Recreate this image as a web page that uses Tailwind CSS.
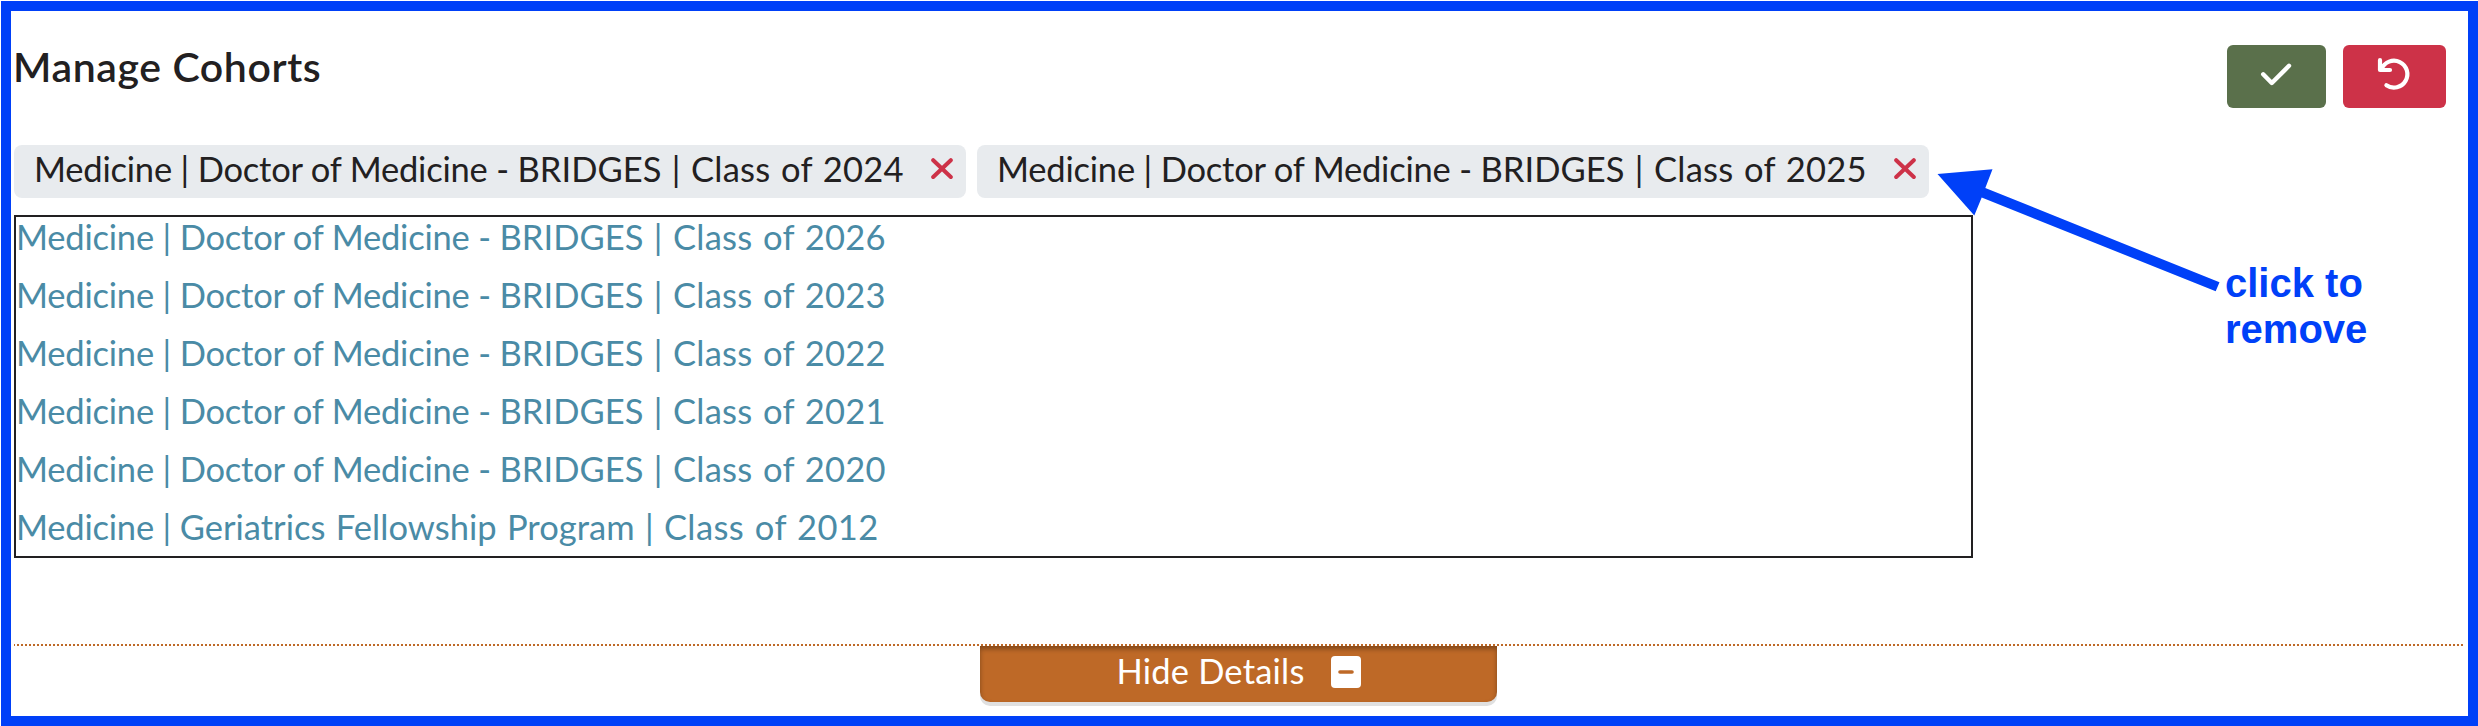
<!DOCTYPE html>
<html lang="en">
<head>
<meta charset="utf-8">
<title>Manage Cohorts</title>
<script src="https://cdn.jsdelivr.net/npm/@tailwindcss/browser@4"></script>
</head>
<body class="bg-white">
<div class="relative h-[726px] w-[2478px] overflow-hidden pt-px pl-px font-['Lato','Open_Sans',sans-serif] text-[34.5px] leading-10 text-[#222021]">
  <main class="flex h-[725px] w-[2477px] flex-col border-10 border-[#0040f8] pl-[3px]">
    <header class="flex h-[134px] items-start justify-between pt-[34px] pr-[22px]">
      <h1 class="mt-0.5 -ml-px text-[41px] leading-10 font-semibold tracking-[0.6px]">Manage Cohorts</h1>
      <div class="flex gap-[17px]">
        <button class="flex h-[63px] w-[99px] items-center justify-center rounded-[6px] bg-[#5a704b]" aria-label="Save">
          <svg class="h-[63px] w-[99px]" viewBox="0 0 99 63" fill="none" stroke="#fff" stroke-width="4.4" stroke-linecap="round" stroke-linejoin="round"><path d="M36.2 29.3 44.8 38 62 20.8"/></svg>
        </button>
        <button class="flex h-[63px] w-[103px] items-center justify-center rounded-[6px] bg-[#cd3248]" aria-label="Undo">
          <svg class="h-[63px] w-[103px]" viewBox="0 0 103 63" fill="none" stroke="#fff" stroke-width="4.2" stroke-linecap="round" stroke-linejoin="round"><path d="M37 15.2V25H47M38.5 24.2A13.4 13.4 0 1 1 43.4 40.2"/></svg>
        </button>
      </div>
    </header>
    <ul class="flex gap-[11px] whitespace-nowrap">
      <li class="flex h-[53px] w-[952px] items-center justify-between rounded-lg bg-[#e8ebee] pr-[13px] pb-1.5 pl-5">
        <span class="tracking-[-0.2px]">Medicine | Doctor of Medicine - <span class="tracking-[0.05px] [word-spacing:1.5px]">BRIDGES | <span class="tracking-[0.26px]">Class of 2024</span></span></span>
        <svg class="h-[22px] w-[22px]" viewBox="0 0 22 22" fill="none" stroke="#cd3248" stroke-width="4" stroke-linecap="round"><path d="M2.2 2.2 19.8 19M19.8 2.2 2.2 19"/></svg>
      </li>
      <li class="flex h-[53px] w-[952px] items-center justify-between rounded-lg bg-[#e8ebee] pr-[13px] pb-1.5 pl-5">
        <span class="tracking-[-0.2px]">Medicine | Doctor of Medicine - <span class="tracking-[0.05px] [word-spacing:1.5px]">BRIDGES | <span class="tracking-[0.26px]">Class of 2025</span></span></span>
        <svg class="h-[22px] w-[22px]" viewBox="0 0 22 22" fill="none" stroke="#cd3248" stroke-width="4" stroke-linecap="round"><path d="M2.2 2.2 19.8 19M19.8 2.2 2.2 19"/></svg>
      </li>
    </ul>
    <ul class="mt-[17px] flex h-[343px] w-[1959px] flex-col gap-[18px] border-2 border-[#222021] tracking-[-0.2px] whitespace-nowrap text-[#4a8ba6]">
      <li>Medicine | Doctor of Medicine - <span class="tracking-[0.05px] [word-spacing:1.5px]">BRIDGES | <span class="tracking-[0.26px]">Class of 2026</span></span></li>
      <li>Medicine | Doctor of Medicine - <span class="tracking-[0.05px] [word-spacing:1.5px]">BRIDGES | <span class="tracking-[0.26px]">Class of 2023</span></span></li>
      <li>Medicine | Doctor of Medicine - <span class="tracking-[0.05px] [word-spacing:1.5px]">BRIDGES | <span class="tracking-[0.26px]">Class of 2022</span></span></li>
      <li>Medicine | Doctor of Medicine - <span class="tracking-[0.05px] [word-spacing:1.5px]">BRIDGES | <span class="tracking-[0.26px]">Class of 2021</span></span></li>
      <li>Medicine | Doctor of Medicine - <span class="tracking-[0.05px] [word-spacing:1.5px]">BRIDGES | <span class="tracking-[0.26px]">Class of 2020</span></span></li>
      <li>Medicine | <span class="tracking-[0.02px] [word-spacing:1.5px]">Geriatrics Fellowship Program | <span class="tracking-[0.4px]">Class of 2012</span></span></li>
    </ul>
    <footer class="mt-[86px] w-[2450px]">
      <div class="h-0.5 bg-[repeating-linear-gradient(90deg,#be6927_0_1px,transparent_1px_3px,#be6927_3px_4px)]"></div>
      <button class="ml-[966px] flex h-14 w-[517px] items-center justify-center gap-[26px] rounded-b-[10px] bg-[#be6927] pb-[7px] text-white shadow-[0_4px_0_#e0e0e0,inset_0_3px_5px_rgba(0,0,0,0.32)]">
        <span class="tracking-[0.2px]">Hide Details</span>
        <svg class="mt-[3px] h-[32px] w-[30px]" viewBox="0 0 30 32"><rect width="30" height="32" rx="4" fill="#fff"/><path d="M9 16H21" stroke="#be6927" stroke-width="3.6" stroke-linecap="round"/></svg>
      </button>
    </footer>
  </main>
  <!-- Annotation over the form -->
  <svg class="absolute top-0 left-0 h-[726px] w-[2478px]" viewBox="0 0 2478 726" fill="#0040f8"><path d="M1937.5 174 1992.5 169.3 1985.3 188 2219.5 282.3 2215.7 291.3 1981.7 197.5 1974.3 215.5Z"/></svg>
  <p class="absolute top-[260px] left-[2225px] font-['Liberation_Sans',sans-serif] text-[40px] leading-[46px] font-bold text-[#0040f8]">click to<br>remove</p>
</div>
</body>
</html>
